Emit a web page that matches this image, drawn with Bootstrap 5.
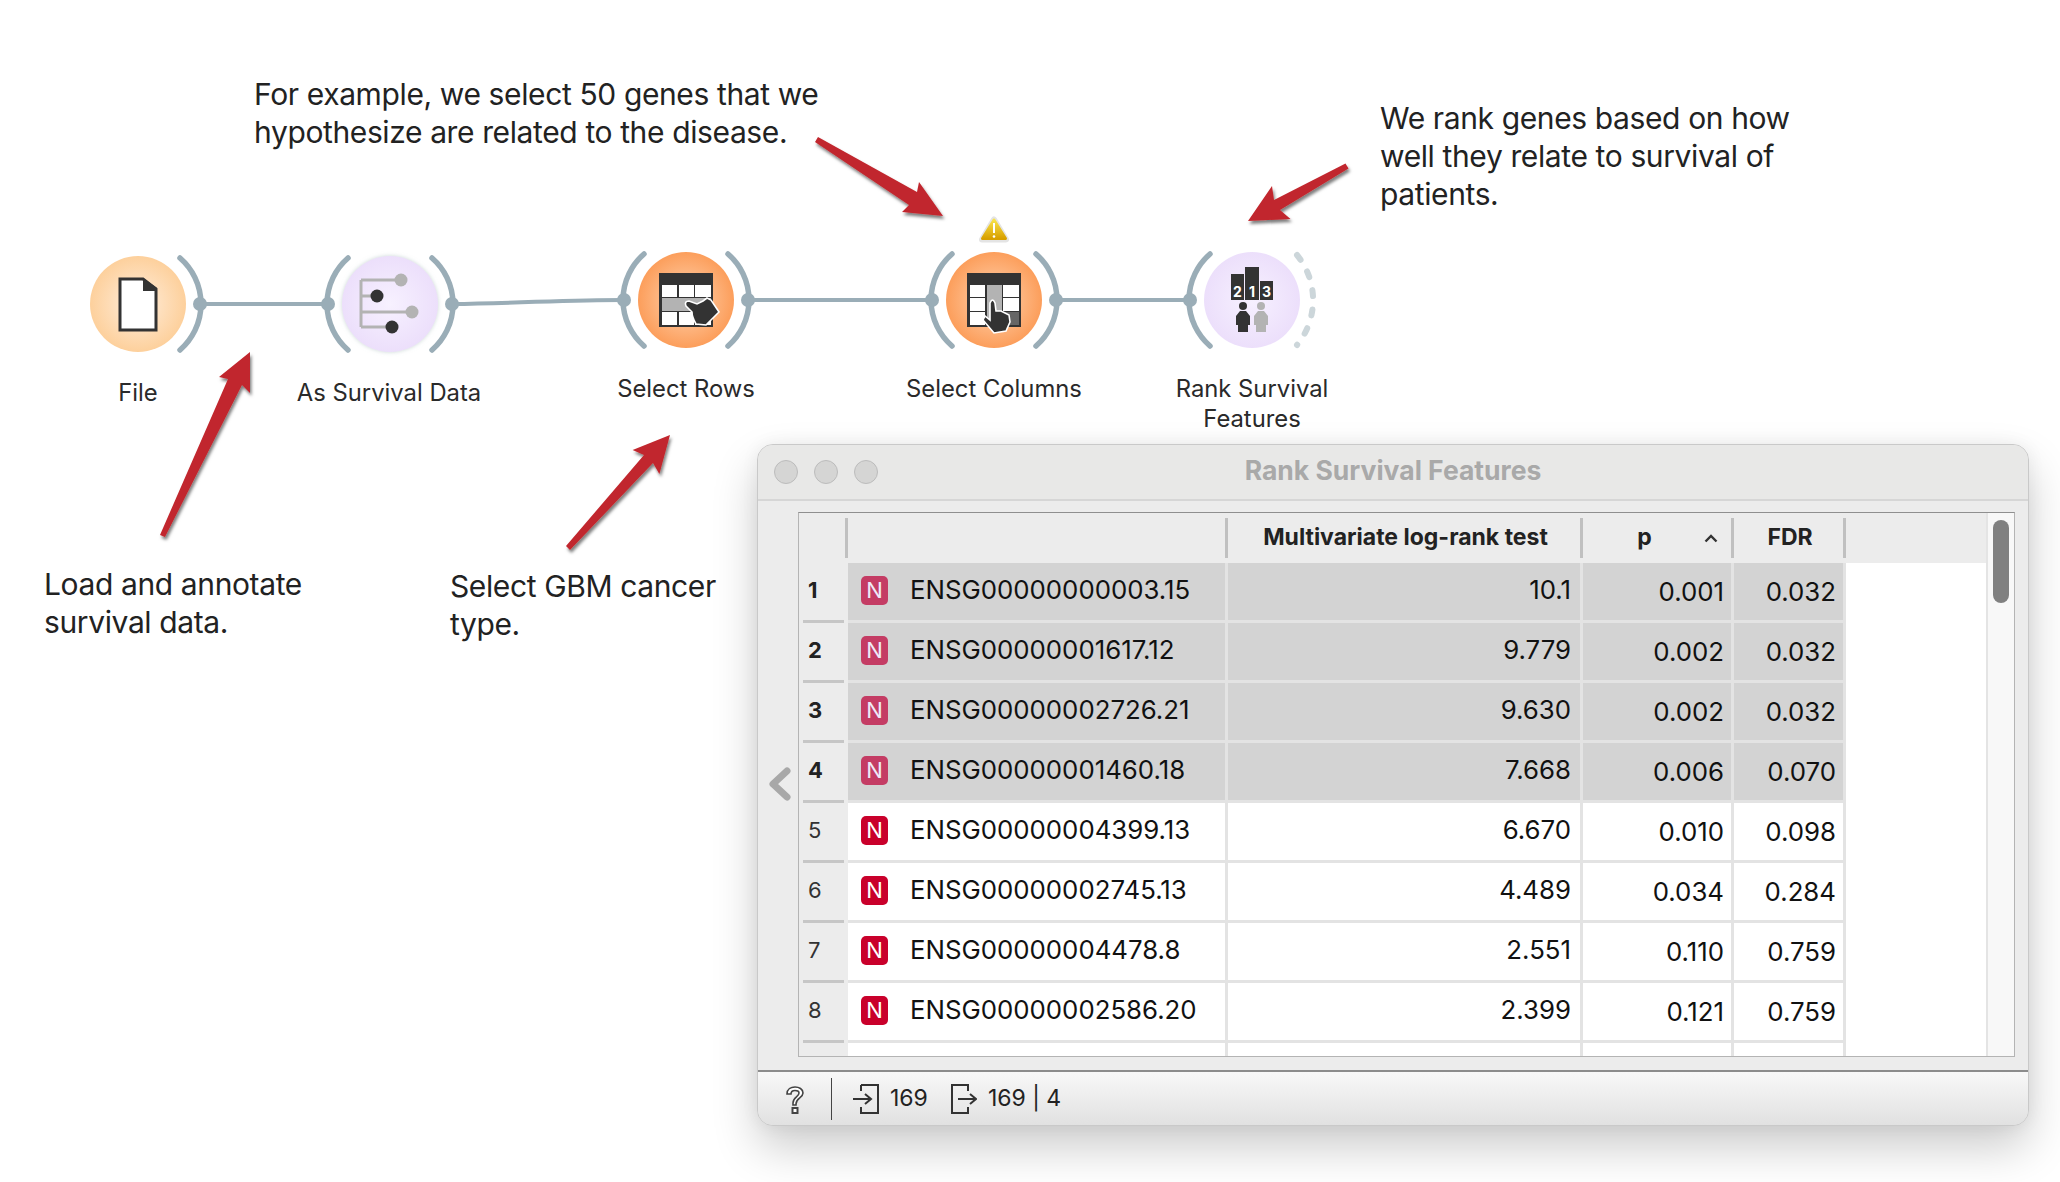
<!DOCTYPE html>
<html lang="en">
<head>
  <meta charset="UTF-8">
  <title>Rank Survival Features</title>
  <link href="https://cdn.jsdelivr.net/npm/bootstrap@5.3.0/dist/css/bootstrap.min.css" rel="stylesheet">
  <style>
    body { background-color: #fff; margin: 0; font-family: Inter, "Liberation Sans", sans-serif; color: #222; }
    .canvas { position: relative; width: 2060px; height: 1182px; overflow: hidden; }
    .wf-svg { position: absolute; left: 0; top: 0; }

    .note { position: absolute; font-size: 30px; line-height: 38px; letter-spacing: -0.38px; color: #222; white-space: nowrap; }
    .node-label { position: absolute; font-size: 23.8px; line-height: 30px; color: #2a2a2a; text-align: center; white-space: nowrap; transform: translateX(-50%); }

    .win { position: absolute; left: 757px; top: 444px; width: 1272px; height: 682px; background: #ececec; border: 1px solid #c9c9c9; border-radius: 16px; box-shadow: 0 22px 46px rgba(0,0,0,.2), 0 0 18px rgba(0,0,0,.06); overflow: hidden; }
    .win-title { height: 56px; background: #e8e8e7; border-bottom: 2px solid #d6d6d6; padding-left: 16px; position: relative; flex: none; }
    .win-dot { width: 24px; height: 24px; border-radius: 50%; background: #d5d5d4; border: 1px solid #bcbcbc; }
    .win-name { position: absolute; left: 0; right: 0; top: 0; line-height: 51px; text-align: center; font-size: 26.5px; font-weight: 700; color: #a9a9a9; }
    .win-body { height: 569px; flex: none; }
    .gutter { width: 40px; flex: none; padding-left: 3px; }
    .frame { width: 1217px; height: 545px; margin-top: 11px; border: 1px solid #b4b4b4; border-top-color: #8f8f8f; background: #fff; overflow: hidden; }
    .tbl-wrap { width: 1187px; flex: none; background: #fff; }

    .rank-table { table-layout: fixed; border-collapse: separate; border-spacing: 0; width: 1187px; margin: 0; }
    .rank-table th, .rank-table td { padding: 0; border: 0; background: #fff; color: #111; font-size: 25.8px; font-weight: 400; height: 60px; position: relative; white-space: nowrap; vertical-align: middle; box-shadow: none; }
    .rank-table thead th { height: 50px; background: #ececec; color: #222; font-size: 23px; font-weight: 700; text-align: center; padding-bottom: 2px; }
    .rank-table thead th.sep::after { content: ""; position: absolute; right: 0; top: 5px; bottom: 5px; width: 3px; background: #c0c0c0; }
    .rank-table td.vh { background: #ececec; color: #333; font-size: 22px; padding-left: 9px; padding-bottom: 5px; }
    .rank-table td.vh::after { content: ""; position: absolute; left: 4px; right: 4px; bottom: 0; height: 3px; background: #c6c6c6; }
    .rank-table td.vh.on { font-weight: 700; color: #222; }
    .rank-table td.c { border-right: 3px solid #e3e3e3; border-bottom: 3px solid #e3e3e3; padding-bottom: 3px; }
    .rank-table td.num { text-align: right; padding-right: 9px; }
    .rank-table td.num2 { text-align: right; padding-right: 7px; padding-top: 1px; padding-bottom: 0; }
    .rank-table td.on-row { background: #d3d3d3; }
    .rank-table td.blank { background: #fff; }
    .gene-n { width: 27px; height: 29px; border-radius: 5px; background: #c9002b; color: #fff; font-size: 22px; line-height: 29px; text-align: center; margin: 0 22px 0 13px; flex: none; }
    .on-row .gene-n { background: #c43c64; color: #eee9f8; }
    .sort-up { position: absolute; right: 16px; top: 21px; }
    .p-head { padding-right: 28px !important; }

    .sbar { width: 28px; flex: none; background: #f8f8f8; border-left: 2px solid #e4e4e4; padding: 7px 5px; }
    .sbar-thumb { width: 16px; height: 83px; background: #808080; border-radius: 8px; }

    .status { height: 55px; flex: none; border-top: 2px solid #8c8c8c; background: linear-gradient(#f8f8f8, #e1e1e1); font-size: 23px; color: #222; }
    .help-ico { width: 73px; flex: none; text-align: center; }
    .stat-div { width: 1px; height: 42px; background: #444; flex: none; margin-right: 21px; }
    .stat-item { gap: 11px; margin-right: 23px; }
  </style>
</head>
<body>

<div class="canvas">

  <!-- workflow: free canvas with nodes, links and arrows -->
  <svg class="wf-svg" width="2060" height="1182" viewBox="0 0 2060 1182">
    <defs>
      <radialGradient id="gFile"><stop offset="0" stop-color="#ffeedd"/><stop offset="1" stop-color="#fdd09c"/></radialGradient>
      <radialGradient id="gSel"><stop offset="0" stop-color="#ffd5b3"/><stop offset="1" stop-color="#fc9e5b"/></radialGradient>
      <radialGradient id="gPur"><stop offset="0" stop-color="#f7f1ff"/><stop offset="1" stop-color="#ecdffb"/></radialGradient>
      <linearGradient id="gWarn" x1="0" y1="0" x2="0" y2="1"><stop offset="0" stop-color="#f8e24a"/><stop offset="1" stop-color="#d8a000"/></linearGradient>
      <filter id="arrowShadow" x="-30%" y="-30%" width="160%" height="160%"><feDropShadow dx="1.5" dy="3" stdDeviation="1.8" flood-color="#000" flood-opacity=".5"/></filter>
      <filter id="nodeGlow" x="-20%" y="-20%" width="140%" height="140%"><feDropShadow dx="0" dy="0" stdDeviation="2" flood-color="#9fb4b4" flood-opacity=".55"/></filter>
      <g id="arcR"><path d="M42 -46A60.9 60.9 0 0 1 42 46" fill="none" stroke="#9aadb7" stroke-width="5.5" stroke-linecap="round"/><circle cx="62" cy="0" r="7" fill="#9aadb7"/></g>
      <g id="arcL"><path d="M-42 -46A60.9 60.9 0 0 0 -42 46" fill="none" stroke="#9aadb7" stroke-width="5.5" stroke-linecap="round"/><circle cx="-62" cy="0" r="7" fill="#9aadb7"/></g>
    </defs>

    <!-- links -->
    <g fill="none" stroke="#9aadb7" stroke-width="4">
      <path d="M200 304H328"/>
      <path d="M452 304C520 303 570 300 623 300"/>
      <path d="M748 300H932"/>
      <path d="M1056 300H1189"/>
    </g>

    <!-- File -->
    <circle cx="138" cy="304" r="48" fill="url(#gFile)"/>
    <use href="#arcR" x="138" y="304"/>
    <path d="M120 279H143L156 289V330H120Z" fill="#fff" stroke="#333" stroke-width="3"/>
    <path d="M143 278L157 288V291H143Z" fill="#333"/>

    <!-- As Survival Data -->
    <circle cx="390" cy="304" r="48" fill="url(#gPur)" filter="url(#nodeGlow)"/>
    <use href="#arcL" x="390" y="304"/>
    <use href="#arcR" x="390" y="304"/>
    <path d="M361 280V327M361 280H400M361 296H377M361 312H412M361 327H392" fill="none" stroke="#b3b3b3" stroke-width="3"/>
    <circle cx="401" cy="280" r="6.5" fill="#b3b3b3"/>
    <circle cx="412" cy="312" r="6.5" fill="#b3b3b3"/>
    <circle cx="377" cy="296" r="6.5" fill="#333"/>
    <circle cx="392" cy="327" r="6.5" fill="#333"/>

    <!-- Select Rows -->
    <circle cx="686" cy="300" r="48" fill="url(#gSel)"/>
    <use href="#arcL" x="686" y="300"/>
    <use href="#arcR" x="686" y="300"/>
    <rect x="659" y="273" width="54" height="54" fill="#333"/>
    <path d="M662 285h15v12h-15zM679 285h15v12h-15zM695 285h16v12h-16zM662 312h15v13h-15zM679 312h15v13h-15zM695 312h16v13h-16z" fill="#fff"/>
    <path d="M662 298h49v13h-49z" fill="#b3b3b3"/>
    <path d="M686 306Q684 301 689 301L697 304L703 301L707 298L711 300L719 312L706 325L696 324Q692 317 692 312Z" fill="#333" stroke="#fff" stroke-width="1.6"/>

    <!-- Select Columns -->
    <circle cx="994" cy="300" r="48" fill="url(#gSel)"/>
    <use href="#arcL" x="994" y="300"/>
    <use href="#arcR" x="994" y="300"/>
    <rect x="967" y="273" width="54" height="54" fill="#333"/>
    <path d="M970 285h15v12h-15zM1003 285h16v12h-16zM970 298h15v13h-15zM1003 298h16v13h-16zM970 312h15v13h-15z" fill="#fff"/>
    <path d="M987 285h15v40h-15z" fill="#b3b3b3"/>
    <path d="M1003 312h16v13h-16z" fill="#666"/>
    <path d="M990 303Q992.5 297 995 303L996 311L1001 311L1005 313L1009 315L1010 322L1006 331L994 333L983 320L985 316L990 320Z" fill="#333" stroke="#fff" stroke-width="1.6"/>
    <path d="M994 219.5L1006 239.5H982Z" fill="#e4e4e4" stroke="#e4e4e4" stroke-width="6" stroke-linejoin="round"/>
    <path d="M994 220L1005.5 238.5H982.5Z" fill="url(#gWarn)" stroke="url(#gWarn)" stroke-width="3" stroke-linejoin="round"/>
    <path d="M994 223V233" stroke="#fff" stroke-width="2"/>
    <circle cx="994" cy="236.5" r="1.3" fill="#fff"/>

    <!-- Rank Survival Features -->
    <circle cx="1252" cy="300" r="48" fill="url(#gPur)"/>
    <use href="#arcL" x="1252" y="300"/>
    <path d="M1297 255A71 71 0 0 1 1297 345" fill="none" stroke="#ccd6da" stroke-width="6" stroke-linecap="round" stroke-dasharray="6 13.4"/>
    <rect x="1231" y="274" width="13" height="26" fill="#333"/>
    <rect x="1245" y="267" width="14" height="33" fill="#333"/>
    <rect x="1260" y="281" width="13" height="19" fill="#333"/>
    <g fill="#fff" font-family="Inter, sans-serif" font-size="14" font-weight="700" text-anchor="middle">
      <text x="1237.5" y="297">2</text><text x="1252" y="297">1</text><text x="1266.5" y="297">3</text>
    </g>
    <circle cx="1243" cy="306" r="4" fill="#333"/>
    <path d="M1240 311H1246L1250 316V325H1248V332H1238V325H1236V316Z" fill="#333"/>
    <circle cx="1261" cy="306" r="4" fill="#b3b3b3"/>
    <path d="M1258 311H1264L1268 316V325H1266V332H1256V325H1254V316Z" fill="#b3b3b3"/>

    <!-- red arrows -->
    <g fill="#c1272d" filter="url(#arrowShadow)">
      <path d="M160 535L228 379L219 377L250 352L250 393L242 385L165 537Z"/>
      <path d="M566 546L644 455L632.6 450L670 435L659.4 474L653 463L570 550Z"/>
      <path d="M815 142L818 137L917 192L919 182L943 216L902 212L909 205Z"/>
      <path d="M1345.5 163.4L1274 200L1272 186L1248 221L1290.5 219L1280 210L1348.5 168.6Z"/>
    </g>
  </svg>

  <div class="note" style="left:254px;top:75px">For example, we select 50 genes that we<br>hypothesize are related to the disease.</div>
  <div class="note" style="left:1380px;top:99px">We rank genes based on how<br>well they relate to survival of<br>patients.</div>
  <div class="note" style="left:44px;top:565px">Load and annotate<br>survival data.</div>
  <div class="note" style="left:450px;top:567px">Select GBM cancer<br>type.</div>

  <div class="node-label" style="left:138px;top:378px">File</div>
  <div class="node-label" style="left:389px;top:378px">As Survival Data</div>
  <div class="node-label" style="left:686px;top:374px">Select Rows</div>
  <div class="node-label" style="left:994px;top:374px">Select Columns</div>
  <div class="node-label" style="left:1252px;top:374px">Rank Survival<br>Features</div>

  <!-- Widget window -->
  <div class="win d-flex flex-column">
    <div class="win-title d-flex align-items-center gap-3">
      <div class="win-dot"></div>
      <div class="win-dot"></div>
      <div class="win-dot"></div>
      <div class="win-name">Rank Survival Features</div>
    </div>

    <div class="win-body d-flex">
      <div class="gutter d-flex align-items-center justify-content-center">
        <svg width="24" height="34" viewBox="0 0 24 34" style="margin-top:-3px"><path d="M19 4L5 17L19 30" fill="none" stroke="#a8a8a8" stroke-width="7" stroke-linecap="round" stroke-linejoin="round"/></svg>
      </div>
      <div class="frame d-flex">
        <div class="tbl-wrap">
          <table class="table table-borderless rank-table">
            <colgroup><col style="width:49px"><col style="width:380px"><col style="width:355px"><col style="width:151px"><col style="width:112px"><col></colgroup>
            <thead>
              <tr>
                <th class="sep"></th>
                <th class="sep"></th>
                <th class="sep">Multivariate log-rank test</th>
                <th class="sep p-head">p
                  <svg class="sort-up" width="14" height="9" viewBox="0 0 14 9"><path d="M1.5 7.5L7 2L12.5 7.5" fill="none" stroke="#333" stroke-width="2.4"/></svg>
                </th>
                <th class="sep">FDR</th>
                <th></th>
              </tr>
            </thead>
            <tbody>
              <tr>
                <td class="vh on">1</td>
                <td class="c on-row"><div class="d-flex align-items-center"><div class="gene-n">N</div>ENSG00000000003.15</div></td>
                <td class="c on-row num">10.1</td><td class="c on-row num2">0.001</td><td class="c on-row num2">0.032</td><td class="blank"></td>
              </tr>
              <tr>
                <td class="vh on">2</td>
                <td class="c on-row"><div class="d-flex align-items-center"><div class="gene-n">N</div>ENSG00000001617.12</div></td>
                <td class="c on-row num">9.779</td><td class="c on-row num2">0.002</td><td class="c on-row num2">0.032</td><td class="blank"></td>
              </tr>
              <tr>
                <td class="vh on">3</td>
                <td class="c on-row"><div class="d-flex align-items-center"><div class="gene-n">N</div>ENSG00000002726.21</div></td>
                <td class="c on-row num">9.630</td><td class="c on-row num2">0.002</td><td class="c on-row num2">0.032</td><td class="blank"></td>
              </tr>
              <tr>
                <td class="vh on">4</td>
                <td class="c on-row"><div class="d-flex align-items-center"><div class="gene-n">N</div>ENSG00000001460.18</div></td>
                <td class="c on-row num">7.668</td><td class="c on-row num2">0.006</td><td class="c on-row num2">0.070</td><td class="blank"></td>
              </tr>
              <tr>
                <td class="vh">5</td>
                <td class="c"><div class="d-flex align-items-center"><div class="gene-n">N</div>ENSG00000004399.13</div></td>
                <td class="c num">6.670</td><td class="c num2">0.010</td><td class="c num2">0.098</td><td class="blank"></td>
              </tr>
              <tr>
                <td class="vh">6</td>
                <td class="c"><div class="d-flex align-items-center"><div class="gene-n">N</div>ENSG00000002745.13</div></td>
                <td class="c num">4.489</td><td class="c num2">0.034</td><td class="c num2">0.284</td><td class="blank"></td>
              </tr>
              <tr>
                <td class="vh">7</td>
                <td class="c"><div class="d-flex align-items-center"><div class="gene-n">N</div>ENSG00000004478.8</div></td>
                <td class="c num">2.551</td><td class="c num2">0.110</td><td class="c num2">0.759</td><td class="blank"></td>
              </tr>
              <tr>
                <td class="vh">8</td>
                <td class="c"><div class="d-flex align-items-center"><div class="gene-n">N</div>ENSG00000002586.20</div></td>
                <td class="c num">2.399</td><td class="c num2">0.121</td><td class="c num2">0.759</td><td class="blank"></td>
              </tr>
              <tr>
                <td class="vh"></td><td class="c"></td><td class="c"></td><td class="c"></td><td class="c"></td><td class="blank"></td>
              </tr>
            </tbody>
          </table>
        </div>
        <div class="sbar"><div class="sbar-thumb"></div></div>
      </div>
    </div>

    <div class="status d-flex align-items-center">
      <div class="help-ico">
        <svg width="22" height="30" viewBox="0 0 22 30"><path d="M3 9C3 4 7 2 11 2C15 2 19 4 19 8C19 13 12 13 12 19V20H9V18C9 12 15 12 15 8C15 6 13 5.5 11 5.5C9 5.5 7 6.5 7 9Z" fill="#fff" stroke="#444" stroke-width="1.6"/><rect x="8.5" y="23" width="5" height="5" fill="#fff" stroke="#444" stroke-width="2"/></svg>
      </div>
      <div class="stat-div"></div>
      <div class="stat-item d-flex align-items-center">
        <svg width="26" height="30" viewBox="0 0 26 30"><path d="M8 1H25V29H8V23M8 7V1" fill="none" stroke="#333" stroke-width="2"/><path d="M0 15H17M12 10L18 15L12 20" fill="none" stroke="#333" stroke-width="2"/></svg>
        <span>169</span>
      </div>
      <div class="stat-item d-flex align-items-center">
        <svg width="26" height="30" viewBox="0 0 26 30"><path d="M17 7V1H1V29H17V23" fill="none" stroke="#333" stroke-width="2"/><path d="M7 15H24M19 10L25 15L19 20" fill="none" stroke="#333" stroke-width="2"/></svg>
        <span>169 | 4</span>
      </div>
    </div>
  </div>

</div>

<script src="https://cdn.jsdelivr.net/npm/bootstrap@5.3.0/dist/js/bootstrap.bundle.min.js"></script>
</body>
</html>
